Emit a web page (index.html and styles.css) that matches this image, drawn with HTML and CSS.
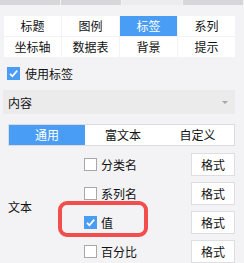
FILE: index.html
```html
<!DOCTYPE html>
<html lang="zh-CN">

<head>
	<meta charset="utf-8">
	<meta name="viewport" content="width=device-width, initial-scale=1">
	<title>标签设置</title>
	<link rel="stylesheet" href="styles.css">
</head>

<body>

	<div class="top-tabs">
		<span class="top-tab"></span>
		<span class="top-tab"></span>
		<span class="top-tab active"></span>
		<span class="top-tab"></span>
	</div>

	<div class="section-grid">
		<span class="cell">标题</span>
		<span class="cell">图例</span>
		<span class="cell active">标签</span>
		<span class="cell">系列</span>
		<span class="cell">坐标轴</span>
		<span class="cell">数据表</span>
		<span class="cell">背景</span>
		<span class="cell">提示</span>
	</div>

	<label class="check-row">
		<span class="box checked"><svg viewBox="0 0 13 13"><path d="M3 6.8 L5.4 9.2 L10.2 3.6"/></svg></span>
		使用标签
	</label>

	<div class="select">
		<span>内容</span>
		<span class="arrow"></span>
	</div>

	<div class="segmented">
		<span class="seg active">通用</span>
		<span class="seg">富文本</span>
		<span class="seg">自定义</span>
	</div>

	<div class="text-group">
		<div class="group-label">文本</div>
		<div class="rows">
			<div class="row">
				<label class="opt"><span class="box"></span>分类名</label>
				<button type="button" class="fmt">格式</button>
			</div>
			<div class="row">
				<label class="opt"><span class="box"></span>系列名</label>
				<button type="button" class="fmt">格式</button>
			</div>
			<div class="row marked">
				<label class="opt"><span class="box checked"><svg viewBox="0 0 13 13"><path d="M3 6.8 L5.4 9.2 L10.2 3.6"/></svg></span>值</label>
				<button type="button" class="fmt">格式</button>
				<span class="highlight"></span>
			</div>
			<div class="row">
				<label class="opt"><span class="box"></span>百分比</label>
				<button type="button" class="fmt">格式</button>
			</div>
		</div>
	</div>

</body>
</html>
```

FILE: styles.css
```css
body {
	font-family: "Noto Sans CJK SC", "Noto Sans", sans-serif;
	font-size: 12px;
	color: #111;
	background: #f3f3f5;
	margin: 0;
	width: 244px;
	height: 263px;
	overflow: hidden;
}

.top-tabs {
	display: grid;
	grid-template-columns: repeat(4, 60px);
	column-gap: 1px;
	height: 5px;
}

.top-tab {
	background: #d7d7db;
}

.top-tab.active {
	background: #ececef;
}

.section-grid {
	display: grid;
	grid-template-columns: repeat(4, 57px);
	grid-auto-rows: 20px;
	gap: 1px;
	margin: 11px 0 0 4px;
}

.cell {
	background: #fff;
	text-align: center;
	line-height: 20px;
}

.cell.active,
.seg.active {
	background: #4a9df5;
	color: #fff;
}

.check-row {
	display: flex;
	align-items: center;
	gap: 5px;
	height: 22px;
	margin: 5px 0 0 7px;
}

.box {
	display: inline-block;
	box-sizing: border-box;
	width: 13px;
	height: 13px;
	border: 1px solid #a8a8a8;
	background: #fff;
	flex: none;
}

.box.checked {
	border: none;
	background: #4a9df5;
}

.box svg {
	display: block;
	width: 13px;
	height: 13px;
	fill: none;
	stroke: #fff;
	stroke-width: 1.7;
}

.select {
	display: flex;
	align-items: center;
	justify-content: space-between;
	height: 24px;
	margin: 6px 9px 0 3px;
	padding: 0 7px 0 5px;
	background: #ebebec;
}

.arrow {
	width: 0;
	height: 0;
	border-left: 3px solid transparent;
	border-right: 3px solid transparent;
	border-top: 3px solid #a5a5a5;
}

.segmented {
	display: grid;
	grid-template-columns: 76px 76px 1fr;
	height: 22px;
	margin: 10px 9px 0 8px;
	box-sizing: border-box;
	border: 1px solid #dcdcde;
	background: #fff;
}

.seg {
	text-align: center;
	line-height: 20px;
}

.text-group {
	display: flex;
	align-items: center;
	margin: 4px 9px 0 8px;
}

.group-label {
	width: 76px;
	flex: none;
	margin-top: -4px;
}

.rows {
	flex: 1;
}

.row {
	position: relative;
	display: flex;
	align-items: center;
	justify-content: space-between;
	height: 29px;
}

.opt {
	display: flex;
	align-items: center;
	gap: 4px;
}

.fmt {
	font: inherit;
	color: inherit;
	width: 44px;
	height: 23px;
	padding: 0;
	background: #fff;
	border: 1px solid #dedee0;
	border-radius: 0;
}

.highlight {
	position: absolute;
	left: -26px;
	top: -7px;
	width: 90px;
	height: 36px;
	box-sizing: border-box;
	border: 4px solid #f24e4e;
	border-radius: 9px;
}
```
